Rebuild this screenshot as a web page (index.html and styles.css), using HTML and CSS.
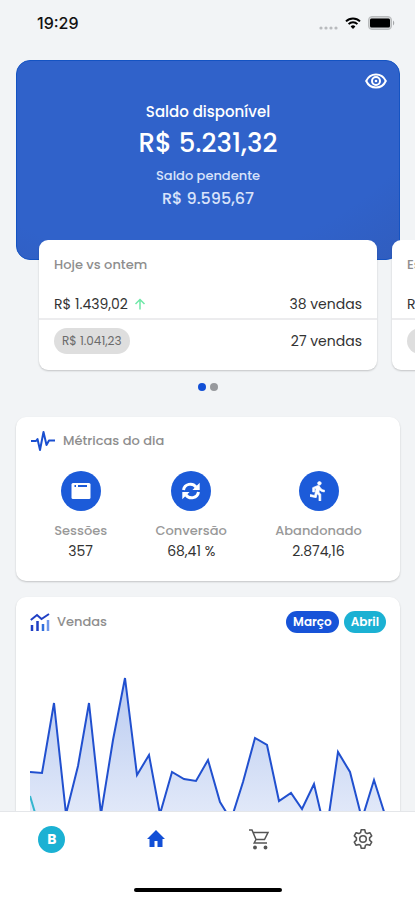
FILE: index.html
```
<!DOCTYPE html>
<html lang="pt-BR">
<head>
  <meta charset="UTF-8" />
  <meta name="viewport" content="width=device-width, initial-scale=1.0"/>
  <title>Início</title>
  <link rel="stylesheet" href="styles.css">
</head>
<body>
  <!-- Status bar -->
  <header class="status-bar">
    <span class="time">19:29</span>
    <div class="status-icons">
      <svg class="signal" width="20" height="4" viewBox="0 0 20 4" fill="#b9bbbe"><circle cx="3" cy="2" r="1.600"/><circle cx="8" cy="2" r="1.600"/><circle cx="13" cy="2" r="1.600"/><circle cx="18" cy="2" r="1.600"/></svg>
      <svg width="16" height="12" viewBox="0 0 16 12" fill="none" stroke="#000" stroke-width="2"><path d="M1 4.400a10 10 0 0 1 14 0M3.600 7.100a6.300 6.300 0 0 1 8.800 0"/><path d="M8 12 5.600 9.500a3.500 3.500 0 0 1 4.800 0z" fill="#000" stroke="none"/></svg>
      <svg width="27" height="14" viewBox="0 0 27 14"><rect x=".5" y=".5" width="23" height="13" rx="3.500" fill="#cfd1d2" stroke="#b9bbbd"/><rect x="2" y="2.500" width="20" height="9" rx="1.500"/><path d="M25 4.500c1.600.8 1.600 4.200 0 5z" fill="#a5a7a9"/></svg>
    </div>
  </header>

  <main>
    <section class="balance">
      <button class="eye" aria-label="Ocultar saldo">
        <svg width="22" height="16" viewBox="0 0 22 16" fill="none" stroke="#fff" stroke-width="2"><path d="M1.200 8C3.200 3.700 6.800 1.500 11 1.500S18.800 3.700 20.800 8C18.800 12.300 15.200 14.500 11 14.500S3.200 12.300 1.200 8z"/><circle cx="11" cy="8" r="4"/><circle cx="11" cy="8" r="1.300" fill="#fff" stroke="none"/></svg>
      </button>
      <p class="label">Saldo disponível</p>
      <p class="amount">R$ 5.231,32</p>
      <p class="pending-label">Saldo pendente</p>
      <p class="pending">R$ 9.595,67</p>
    </section>

    <!-- Carousel -->
    <section class="carousel">
      <article class="slide">
        <h2>Hoje vs ontem</h2>
        <div class="row first">
          <span class="value">R$ 1.439,02
            <svg width="12" height="12" viewBox="0 0 12 12" fill="none" stroke="#6fe8a8" stroke-width="1.500"><path d="M6 11.500V1.500M1.500 6 6 1.500 10.500 6"/></svg>
          </span>
          <span>38 vendas</span>
        </div>
        <div class="row">
          <span class="pill">R$ 1.041,23</span>
          <span>27 vendas</span>
        </div>
      </article>
      <article class="slide">
        <h2>Esta semana</h2>
        <div class="row first">
          <span class="value">R$ 5.231,32</span>
        </div>
        <div class="row">
          <span class="pill">R$ 4.120,10</span>
        </div>
      </article>
    </section>
    <div class="dots"><span class="dot active"></span><span class="dot"></span></div>

    <section class="card">
      <div class="card-title">
        <svg width="26" height="22" viewBox="0 0 26 22" fill="none" stroke="#1a4fd0" stroke-width="2" stroke-linejoin="round"><path d="M1 11h5l1.500-2 2.500 11L13.500 2l3 13L19 10.500h6"/></svg>
        <h2>Métricas do dia</h2>
      </div>
      <div class="metrics">
        <div class="metric">
          <span class="circle"><svg width="20" height="18" viewBox="0 0 20 18"><rect x=".5" y="1" width="19" height="16" rx="1.500" fill="#fff"/><path d="M3.500 3h1.500v2H3.500zM7 3h9v2H7z" fill="#1c5bd9"/></svg></span>
          <span class="name">Sessões</span>
          <span class="number">357</span>
        </div>
        <div class="metric">
          <span class="circle"><svg width="20" height="20" viewBox="0 0 20 20" fill="none" stroke="#fff" stroke-width="3"><path d="M2.500 9A7 7 0 0 1 15 6M17.500 11A7 7 0 0 1 5 14"/><path d="M18.700 1.700V9h-7.300zM1.300 18.300V11h7.300z" fill="#fff" stroke="none"/></svg></span>
          <span class="name">Conversão</span>
          <span class="number">68,41 %</span>
        </div>
        <div class="metric">
          <span class="circle"><svg width="18" height="20" viewBox="3 1 20 22" fill="#fff"><path d="M13.490 5.480c1.100 0 2-.9 2-2s-.9-2-2-2-2 .9-2 2 .9 2 2 2zm-3.600 13.900 1-4.400 2.100 2v6h2v-7.500l-2.100-2 .6-3c1.300 1.500 3.300 2.500 5.500 2.500v-2c-1.900 0-3.500-1-4.300-2.400l-1-1.600c-.4-.6-1-1-1.700-1-.3 0-.5.1-.8.100l-5.200 2.200v4.700h2v-3.400l1.800-.7-1.600 8.100-4.900-1-.4 2z" stroke="#fff" stroke-width=".8"/></svg></span>
          <span class="name">Abandonado</span>
          <span class="number">2.874,16</span>
        </div>
      </div>
    </section>

    <section class="card sales">
      <div class="card-title">
        <svg width="20" height="18" viewBox="0 0 20 18" fill="none" stroke="#1f3fc4" stroke-width="2"><path d="M.8 7 7 2l4.500 4L19 1"/><path d="M2 12v6M7.500 8v10" stroke-width="2.500"/><path d="M13 11v7" stroke="#2f6fdc" stroke-width="2.500"/><path d="M18 7v11" stroke="#6d97ea" stroke-width="2.500"/></svg>
        <h2>Vendas</h2>
        <div class="months">
          <button class="month">Março</button>
          <button class="month teal">Abril</button>
        </div>
      </div>
      <svg class="chart" viewBox="0 0 356 240" preserveAspectRatio="none" role="img" aria-label="Vendas por dia">
        <defs>
          <linearGradient id="fill" gradientUnits="userSpaceOnUse" x1="0" y1="28" x2="0" y2="240">
            <stop offset="0" stop-color="#b9cbf0"/>
            <stop offset=".65" stop-color="#e2e9f9"/>
            <stop offset="1" stop-color="#f4f7fd"/>
          </linearGradient>
        </defs>
        <path class="area" d="M0 122 12 123 24 53 36 164 48 116 59 53 71 164 83 90 95 28 107 125 119 105 130 164 142 122 154 129 166 131 178 110 190 152 201 170 213 132 225 88 237 95 249 151 261 143 272 159 284 134 296 185 308 102 320 122 332 169 344 130 356 168V240H0z"/>
        <path class="line" d="M0 122 12 123 24 53 36 164 48 116 59 53 71 164 83 90 95 28 107 125 119 105 130 164 142 122 154 129 166 131 178 110 190 152 201 170 213 132 225 88 237 95 249 151 261 143 272 159 284 134 296 185 308 102 320 122 332 169 344 130 356 168"/>
        <path class="line teal-line" d="M0 146 12 186 24 210"/>
      </svg>
    </section>
  </main>

  <!-- Bottom navigation -->
  <nav>
    <div class="tabs">
      <a href="#perfil"><span class="avatar">B</span></a>
      <a href="#inicio" aria-label="Início"><svg width="20" height="20" viewBox="0 0 20 20" fill="#124fd6"><path d="M10 1 1 10h2.500v8h5v-6h3v6h5v-8H19z"/></svg></a>
      <a href="#vendas" aria-label="Vendas"><svg width="22" height="22" viewBox="0 0 22 22" fill="none" stroke="#555" stroke-width="1.500"><path d="M1 2h3l4 9.500h8.500L20 4.500H5M8 11.500 6.200 15H19"/><circle cx="7" cy="19.500" r="1.200" fill="#555"/><circle cx="17.500" cy="19.500" r="1.200" fill="#555"/></svg></a>
      <a href="#ajustes" aria-label="Ajustes"><svg width="22" height="22" viewBox="0 0 24 24" fill="none" stroke="#555" stroke-width="1.700" stroke-linejoin="round"><path d="M10 2h4l.6 3 1.900 1.100 3-1 2 3.500-2.300 2.100v2.600l2.300 2.100-2 3.500-3-1-1.900 1.100-.6 3h-4l-.6-3-1.900-1.100-3 1-2-3.500 2.300-2.100v-2.600L2.500 8.600l2-3.500 3 1L9.400 5z"/><circle cx="12" cy="12" r="3.600"/></svg></a>
    </div>
    <div class="home-bar"></div>
  </nav>
</body>
</html>
```
FILE: styles.css
```
:root {
  --bg: #f2f4f6;
  --blue: #1c5bd9;
  --teal: #1bb1d3;
  --muted: #8e8e8e;
  --text: #333;
}

* {
  box-sizing: border-box;
}

body {
  margin: 0;
  height: 100vh;
  display: flex;
  flex-direction: column;
  background: var(--bg);
  color: var(--text);
  font-family: Poppins, Inter, sans-serif;
  font-size: 14px;
  line-height: 20px;
}

h2, p {
  margin: 0;
}

h2 {
  font-size: 13px;
  font-weight: 500;
  color: var(--muted);
}

button {
  border: none;
  font-family: inherit;
  cursor: pointer;
}

svg {
  display: block;
}

.status-bar {
  display: flex;
  flex-shrink: 0;
  justify-content: space-between;
  align-items: center;
  height: 60px;
  padding: 0 20px 14px 37px;
}

.time {
  font-family: Inter, sans-serif;
  font-size: 16px;
  font-weight: 500;
  color: #111;
}

.status-icons {
  display: flex;
  align-items: center;
  gap: 7px;
}

.signal {
  align-self: flex-end;
}

main {
  flex: 1;
  min-height: 0;
  overflow-y: auto;
  scrollbar-width: none;
}

/* Balance */
.balance {
  position: relative;
  height: 200px;
  margin: 0 15px 0 16px;
  padding-top: 40px;
  border: 1px solid #1453c2;
  border-radius: 14px;
  background:
    radial-gradient(circle at 40% -60%, transparent 320px, rgba(50, 75, 150, 0.25) 400px),
    #3062ca;
  color: #fff;
  text-align: center;
}

.eye {
  position: absolute;
  top: 12px;
  right: 12px;
  padding: 0;
  background: transparent;
}

.label {
  font-size: 15px;
  line-height: 22px;
  font-weight: 500;
}

.amount {
  font-size: 26px;
  line-height: 40px;
  font-weight: 500;
}

.pending-label {
  font-size: 13px;
  line-height: 26px;
  font-weight: 500;
  color: #d8e2fa;
}

.pending {
  font-size: 16px;
  line-height: 20px;
  font-weight: 500;
  color: #d8e2fa;
}

/* Carousel */
.carousel {
  position: relative;
  display: flex;
  gap: 15px;
  margin-top: -20px;
  padding: 0 38px 4px 39px;
  overflow-x: auto;
  scrollbar-width: none;
}

.slide {
  flex: 0 0 100%;
  height: 130px;
  padding-top: 15px;
  background: #fff;
  border-radius: 9px;
  box-shadow: 0 1px 2px rgba(0, 0, 0, 0.2);
}

.slide h2 {
  padding: 0 15px;
}

.row {
  display: flex;
  justify-content: space-between;
  align-items: center;
  height: 42px;
  padding: 0 15px;
}

.first {
  height: 30px;
  margin-top: 15px;
  border-bottom: 2px solid #ececee;
}

.value {
  display: flex;
  align-items: center;
  gap: 6px;
}

.pill {
  padding: 3px 8px;
  border-radius: 13px;
  background: #dedede;
  color: #6b6b6b;
  font-size: 12px;
}

.dots {
  display: flex;
  justify-content: center;
  gap: 4px;
  margin: 9px 0 26px;
}

.dot {
  width: 8px;
  height: 8px;
  border-radius: 50%;
  background: #97999d;
}

.active {
  background: #124fd6;
}

/* Cards */
.card {
  margin: 0 15px 16px 16px;
  padding: 13px 14px 20px;
  background: #fff;
  border-radius: 10px;
  box-shadow: 0 1px 2px rgba(0, 0, 0, 0.2);
}

.card-title {
  display: flex;
  align-items: center;
  gap: 7px;
  height: 22px;
}

.metrics {
  display: flex;
  justify-content: space-around;
  margin-top: 19px;
}

.metric {
  display: flex;
  flex-direction: column;
  align-items: center;
}

.circle {
  display: flex;
  align-items: center;
  justify-content: center;
  width: 40px;
  height: 40px;
  margin-bottom: 10px;
  border-radius: 50%;
  background: var(--blue);
}

.name {
  font-size: 13px;
  font-weight: 500;
  color: #999;
}

.number {
  font-size: 14px;
}

.months {
  display: flex;
  gap: 5px;
  margin-left: auto;
}

.month {
  padding: 0 7px;
  border-radius: 11px;
  background: #1753d8;
  color: #fff;
  font-size: 12px;
  font-weight: 600;
  line-height: 22px;
}

.teal {
  background: var(--teal);
}

.sales {
  padding-top: 14px;
}

.chart {
  width: 100%;
  height: 240px;
  margin-top: 17px;
}

.area {
  fill: url(#fill);
}

.line {
  fill: none;
  stroke: #2150cf;
  stroke-width: 2;
  vector-effect: non-scaling-stroke;
}

.teal-line {
  stroke: #35b6cf;
}

/* Bottom navigation */
nav {
  flex-shrink: 0;
  background: #fff;
  border-top: 1px solid #e4e6e9;
}

.tabs {
  display: grid;
  grid-template-columns: repeat(4, 1fr);
  height: 54px;
}

.tabs a {
  display: flex;
  align-items: center;
  justify-content: center;
  text-decoration: none;
}

.avatar {
  width: 27px;
  border-radius: 50%;
  background: var(--teal);
  color: #fff;
  font-size: 14px;
  font-weight: 700;
  line-height: 27px;
  text-align: center;
}

.home-bar {
  width: 148px;
  height: 4px;
  margin: 22px auto 8px;
  border-radius: 2px;
  background: #000;
}
```
